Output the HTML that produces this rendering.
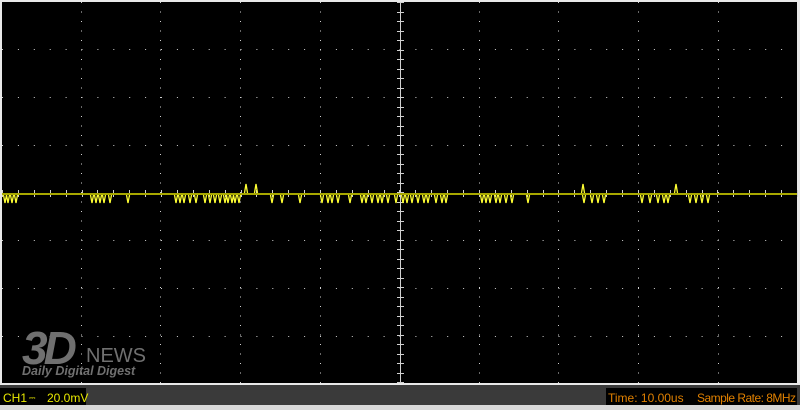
<!DOCTYPE html>
<html><head><style>
html,body{margin:0;padding:0;width:800px;height:410px;overflow:hidden;background:#d8d8d8}
svg{display:block}
</style></head><body>
<svg width="800" height="410" xmlns="http://www.w3.org/2000/svg" font-family="Liberation Sans, Arial, sans-serif">
<defs>
<pattern id="dv" x="0" y="2" width="1" height="9.5" patternUnits="userSpaceOnUse"><rect x="0" y="0" width="1" height="1" fill="#cfcfcf"/></pattern>
<pattern id="dh" x="2" y="0" width="15.9" height="1" patternUnits="userSpaceOnUse"><rect x="0" y="0" width="1" height="1" fill="#cfcfcf"/></pattern>
</defs>
<rect x="0" y="0" width="800" height="385" fill="#e8e8e8"/>
<rect x="2" y="2" width="795" height="381" fill="#000"/>
<g>
<rect x="81" y="2" width="1" height="381" fill="url(#dv)"/>
<rect x="160" y="2" width="1" height="381" fill="url(#dv)"/>
<rect x="240" y="2" width="1" height="381" fill="url(#dv)"/>
<rect x="320" y="2" width="1" height="381" fill="url(#dv)"/>
<rect x="479" y="2" width="1" height="381" fill="url(#dv)"/>
<rect x="558" y="2" width="1" height="381" fill="url(#dv)"/>
<rect x="638" y="2" width="1" height="381" fill="url(#dv)"/>
<rect x="718" y="2" width="1" height="381" fill="url(#dv)"/>
</g>
<g>
<rect x="2" y="49" width="795" height="1" fill="url(#dh)"/>
<rect x="2" y="97" width="795" height="1" fill="url(#dh)"/>
<rect x="2" y="145" width="795" height="1" fill="url(#dh)"/>
<rect x="2" y="240" width="795" height="1" fill="url(#dh)"/>
<rect x="2" y="288" width="795" height="1" fill="url(#dh)"/>
<rect x="2" y="336" width="795" height="1" fill="url(#dh)"/>
</g>
<rect x="400" y="2" width="1" height="381" fill="#d0d0d0"/>
<rect x="2" y="193" width="795" height="1" fill="#d0d0d0"/>
<g stroke="#d0d0d0" stroke-width="1" id="ticks"></g>
<g fill="#707070">
<text x="22" y="364" font-size="46" font-weight="bold" font-style="italic" letter-spacing="-4">3D</text>
<text x="86" y="362" font-size="20">NEWS</text>
<text x="22" y="375" font-size="12.5" font-weight="bold" font-style="italic">Daily Digital Digest</text>
</g>
<rect x="2" y="193" width="795" height="2" fill="#a8a800"/>
<g id="spk" stroke="#ffff33" stroke-width="1.3" fill="none"></g>
<rect x="0" y="385" width="800" height="20" fill="#3a3a3a"/>
<rect x="0" y="388" width="86" height="17" fill="#000"/>
<text x="3" y="402" font-size="12" fill="#e8e800">CH1</text>
<text x="29" y="400" font-size="8" fill="#e8e800">⎓</text>
<text x="47" y="402" font-size="12" fill="#e8e800">20.0mV</text>
<rect x="606" y="388" width="191" height="17" fill="#000"/>
<text x="608" y="402" font-size="12" fill="#e08000">Time: 10.00us</text>
<text x="697" y="402" font-size="12" fill="#e08000" textLength="99">Sample Rate: 8MHz</text>
</svg>
<script>
var ns="http://www.w3.org/2000/svg",t=document.getElementById("ticks");
for(var y=2;y<383;y+=9.5){var l=document.createElementNS(ns,"line");l.setAttribute("x1",397);l.setAttribute("x2",404);l.setAttribute("y1",Math.round(y)+.5);l.setAttribute("y2",Math.round(y)+.5);t.appendChild(l);}
for(var x=2;x<797;x+=15.9){var l=document.createElementNS(ns,"line");l.setAttribute("y1",190);l.setAttribute("y2",197);l.setAttribute("x1",Math.round(x)+.5);l.setAttribute("x2",Math.round(x)+.5);t.appendChild(l);}
var s=document.getElementById("spk");
var xs=[5,8,12,16,92,96,100,104,110,128,176,180,184,190,196,205,210,215,220,225,228,232,235,239,272,282,300,322,328,332,338,350,362,366,372,378,382,388,396,403,407,412,418,424,428,436,442,446,482,486,490,496,500,506,512,528,584,592,598,604,642,650,658,664,668,690,696,702,708];
xs.forEach(function(x){var p=document.createElementNS(ns,"polyline");p.setAttribute("points",(x-1.5)+",195 "+x+",203 "+(x+1.5)+",195");s.appendChild(p);});
[246,256,583,676].forEach(function(x){var p=document.createElementNS(ns,"polyline");p.setAttribute("points",(x-1.5)+",193 "+x+",184 "+(x+1.5)+",193");s.appendChild(p);});
</script>
</body></html>
